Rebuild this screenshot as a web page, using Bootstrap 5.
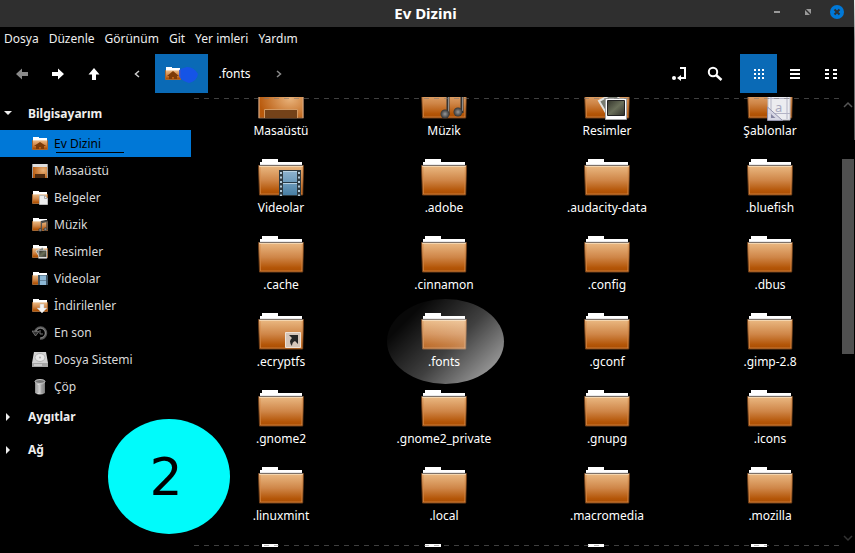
<!DOCTYPE html>
<html lang="tr" data-bs-theme="dark">
<head>
<meta charset="utf-8">
<meta name="viewport" content="width=device-width, initial-scale=1">
<title>Ev Dizini</title>
<link href="https://cdn.jsdelivr.net/npm/bootstrap@5.3.0/dist/css/bootstrap.min.css" rel="stylesheet">
<style>
  body { background: #000; color: #eee; font-family: "Noto Sans", "Open Sans", sans-serif; font-size: 12px; line-height: 18px; }
  a { color: inherit; text-decoration: none; }
  svg { display: block; }
  .fm-title { background: #2f2f2f; color: #d6d6d6; height: 27px; }
  .fm-title h1 { font-size: 15px; line-height: 22px; font-weight: 700; padding-top: 2px; }
  .fm-winbtns { right: 11px; top: 5px; gap: 15px; }
  .fm-plain { background: none; border: 0; padding: 0; color: inherit; font-size: 12px; line-height: 18px; display: flex; align-items: center; justify-content: center; }
  .fm-menu { gap: 10px; padding: 3px 4px; height: 27px; }
  .fm-tools { height: 43px; padding: 0 6px 4px 4px; }
  .fm-tools .fm-plain { width: 36px; height: 39px; color: #fff; }
  .fm-tools .fm-crumb { width: 53px; }
  .fm-tools .fm-wide { width: 37px; }
  .fm-tools .fm-dim { color: #8a8a8a; }
  .fm-tools .fm-on { background: #0a6ab6; }
  .fm-gap { margin-right: 7px; }
  .fm-side { width: 191px; margin-right: 3px; }
  .fm-head { height: 33px; padding: 0 4px; gap: 15px; font-weight: 700; width: 100%; justify-content: flex-start; color: #eee; }
  .fm-head svg { width: 9px; }
  .fm-place { height: 27px; padding-left: 32px; gap: 6px; color: #d9d9d9; }
  .fm-place.fm-on { background: #0078d7; color: #000; }
  .fm-mark { left: 56px; width: 68px; height: 1px; background: #000; bottom: 4px; }
  .fm-pane::before, .fm-pane::after { content: ""; position: absolute; left: 0; right: 1px; height: 1px; z-index: 2;
    background: repeating-linear-gradient(90deg, #77777788 0 5px, transparent 5px 10px); }
  .fm-pane::before { top: 1px; }
  .fm-pane::after { bottom: 1px; }
  .fm-view { height: calc(100vh - 103px); overflow: hidden; }
  .fm-grid { display: grid; grid-template-columns: repeat(4, 1fr); column-gap: 31px; row-gap: 17px; padding: 0 5px 0 21px; margin-top: -17px; }
  .fm-item { display: flex; flex-direction: column; align-items: center; gap: 2px; color: #fff; }
  .fm-item svg { width: 48px; height: 40px; overflow: visible; }
  .fm-glow { left: 50%; top: -12px; width: 117px; height: 85px; margin-left: -57px; border-radius: 50%;
    background: linear-gradient(135deg, #ffffff08 20%, #ffffff40 55%, #ffffff90 85%); }
  .fm-scroll { width: 14px; padding: 4px 1px 3px; }
  .fm-thumb { background: #505050; height: 195px; margin-top: 51px; }
  .fm-edge { top: 0; right: 0; width: 1px; height: 140px; background: linear-gradient(#eee, #888 40px, #555); }
  .fm-step { left: 108px; top: 419px; width: 122px; height: 115px; border-radius: 50%; background: #00fbfb; color: #000;
    font: 52px "DejaVu Sans", sans-serif; padding-right: 6px; }
</style>
<script src="https://cdn.jsdelivr.net/npm/bootstrap@5.3.0/dist/js/bootstrap.bundle.min.js"></script>
</head>
<body class="vh-100 overflow-hidden d-flex flex-column position-relative">
<svg width="0" height="0" class="position-absolute" aria-hidden="true">
  <defs>
    <linearGradient id="gBody" x1="0" y1="0" x2="0" y2="1"><stop offset="0" stop-color="#ebba84"/><stop offset=".5" stop-color="#cf8648"/><stop offset=".85" stop-color="#b45608"/><stop offset="1" stop-color="#a84c02"/></linearGradient>
    <radialGradient id="gDesk" cx=".7" cy=".45" r=".7"><stop offset="0" stop-color="#e8b27a"/><stop offset="1" stop-color="#b8590c"/></radialGradient>
    <linearGradient id="gFilm" x1="0" y1="0" x2="0" y2="1"><stop offset="0" stop-color="#8fb4d0"/><stop offset="1" stop-color="#487fa4"/></linearGradient>
    <radialGradient id="gNote"><stop offset="0" stop-color="#999"/><stop offset="1" stop-color="#333"/></radialGradient>
    <linearGradient id="gCan"><stop offset="0" stop-color="#888"/><stop offset=".35" stop-color="#ddd"/><stop offset="1" stop-color="#777"/></linearGradient>
    <linearGradient id="gShot" x1="0" y1="0" x2="1" y2="1"><stop offset="0" stop-color="#34352c"/><stop offset=".5" stop-color="#6a6f5a"/><stop offset="1" stop-color="#30312a"/></linearGradient>
    <symbol id="folder" viewBox="0 0 48 40" overflow="visible">
      <path d="M5 2h16v3h24v4H3V5h2z" fill="#fff"/><path d="M3 7h42v2H3z" fill="#e9e9ea"/>
      <path d="M1.500 8.500h45l-.8 29.500H2.500z" fill="url(#gBody)" stroke="#71401a" stroke-width="1"/>
      <path d="M2 8.500h44" stroke="#7c7067"/><path d="M2.500 9.500h43" stroke="#f4d5ae"/>
      <path d="M3.300 37h42M3 10l.5 27M45.300 10l-.5 27" stroke="#d58a48" stroke-opacity=".7" fill="none"/>
    </symbol>
    <symbol id="sfolder" viewBox="0 0 16 16" overflow="visible">
      <path d="M1 1h6v1h8v3H1z" fill="#fff"/><path d="M.5 4.500h15v9H.5z" fill="url(#gBody)" stroke="#a26632"/><path d="M1 4.500h14" stroke="#f0d4b5"/>
    </symbol>
    <symbol id="film" viewBox="0 0 22 26">
      <path d="M0 0h22v26H0z" fill="#2d3940"/><path d="M4 1h14v24H4z" fill="url(#gFilm)"/><path d="M4 12.500h14" stroke="#263a47"/><path d="M4 13.500h14M4 1.500h14" stroke="#b8d2e2"/>
      <path d="M2 2v24M20 2v24" stroke="#b5cbd9" stroke-width="2" stroke-dasharray="2 2.500"/>
    </symbol>
    <symbol id="notes" viewBox="0 0 24 30">
      <path d="M8 26V4l14-3v23" fill="none" stroke="#343434" stroke-width="3"/><path d="M8 6l14-3" stroke="#484848" stroke-width="4"/><path d="M8.500 24V4M22.500 22V4" stroke="#8a8a8a"/>
      <circle cx="5" cy="25" r="4.500" fill="url(#gNote)"/><circle cx="18" cy="23" r="4.500" fill="url(#gNote)"/>
    </symbol>
    <symbol id="photos" viewBox="0 0 30 30" overflow="visible">
      <path d="M1 10L18 1l8 18-15 8z" fill="#777b70" stroke="#e2e2df" stroke-width="2"/>
      <path d="M7.500 7.500h21v21h-21z" fill="#fff" stroke="#a5a5a5"/><path d="M9.500 9.500h17v15h-17z" fill="url(#gShot)" stroke="#222"/>
    </symbol>
  </defs>
</svg>

<header class="fm-title position-relative text-center flex-shrink-0">
  <h1 class="m-0 pe-1">Ev Dizini</h1>
  <div class="fm-winbtns position-absolute d-flex align-items-center">
    <button class="fm-plain" aria-label="Küçült"><svg width="16" height="14"><path d="M4 6h6v2H4z" fill="#999"/></svg></button>
    <button class="fm-plain" aria-label="Büyüt"><svg width="14" height="14"><path d="M5 4h5v5zM4 5v5h5z" fill="#999"/></svg></button>
    <button class="fm-plain" aria-label="Kapat"><svg width="14" height="14" overflow="visible"><circle cx="7" cy="7" r="7" fill="#0078d7"/><path d="M4.500 4.500l5 5m0-5l-5 5" stroke="#2f2f2f" stroke-width="2"/></svg></button>
  </div>
</header>

<nav class="fm-menu d-flex flex-shrink-0" aria-label="Menü">
  <a href="#">Dosya</a><a href="#">Düzenle</a><a href="#">Görünüm</a><a href="#">Git</a><a href="#">Yer imleri</a><a href="#">Yardım</a>
</nav>

<div class="fm-tools d-flex flex-shrink-0" role="toolbar" aria-label="Gezinti">
  <button class="fm-plain fm-dim" aria-label="Geri"><svg width="12" height="12"><path d="M0 6l6-5.500V4h6v4H6v3.500z" fill="currentColor"/></svg></button>
  <button class="fm-plain" aria-label="İleri"><svg width="12" height="12"><path d="M12 6L6 .5V4H0v4h6v3.500z" fill="currentColor"/></svg></button>
  <button class="fm-plain fm-gap" aria-label="Yukarı"><svg width="12" height="12"><path d="M6 0l5.500 6.500H8V12H4V6.500H.5z" fill="currentColor"/></svg></button>
  <button class="fm-plain" aria-label="Önceki"><svg width="6" height="8"><path d="M5 1L1.500 4 5 7" fill="none" stroke="#ccc" stroke-width="1.500"/></svg></button>
  <button class="fm-plain fm-crumb fm-on" aria-label="Ev Dizini"><svg width="36" height="20" viewBox="0 0 36 20"><use href="#sfolder" x="1" y="2" width="16" height="16"/><path d="M3 12l6-5 6 5h-2v3h-3v-2H8v2H5v-3z" fill="#7c3b08"/><path d="M15 6q4-2 8-3 7 0 11 7-1 7-9 9-9-3-10-7z" fill="#1750ef" opacity=".85"/></svg></button>
  <button class="fm-plain fm-crumb">.fonts</button>
  <button class="fm-plain fm-dim" aria-label="Sonraki"><svg width="6" height="8"><path d="M1 1l3.500 3L1 7" fill="none" stroke="currentColor" stroke-width="1.500"/></svg></button>
  <button class="fm-plain ms-auto" aria-label="Konum"><svg width="16" height="14"><circle cx="3" cy="11" r="2" fill="#fff"/><path d="M9 1h5v10H8" fill="none" stroke="#fff" stroke-width="2"/><path d="M6 11l4-3v6z" fill="#fff"/></svg></button>
  <button class="fm-plain fm-gap" aria-label="Ara"><svg width="16" height="16"><circle cx="6" cy="6" r="4.200" fill="none" stroke="#fff" stroke-width="2"/><path d="M9 9l5.500 5" stroke="#fff" stroke-width="2.500"/></svg></button>
  <button class="fm-plain fm-wide fm-on" aria-label="Simge görünümü"><svg width="10" height="10"><path d="M0 1h10M0 5h10M0 9h10" stroke="#fff" stroke-width="2" stroke-dasharray="2 2"/></svg></button>
  <button class="fm-plain" aria-label="Liste görünümü"><svg width="10" height="10"><path d="M0 1h10M0 5h10M0 9h10" stroke="#fff" stroke-width="2"/></svg></button>
  <button class="fm-plain" aria-label="Sıkışık görünüm"><svg width="12" height="10"><path d="M0 1h12M0 5h12M0 9h12" stroke="#fff" stroke-width="2" stroke-dasharray="4 4"/></svg></button>
</div>

<main class="d-flex flex-fill">
  <aside class="fm-side flex-shrink-0">
    <button class="fm-plain fm-head"><svg height="5"><path d="M0 0h8L4 4z" fill="#eee"/></svg>Bilgisayarım</button>
    <a href="#" class="fm-place fm-on d-flex align-items-center position-relative"><svg width="16" height="16"><use href="#sfolder"/><path d="M2 10l6-4 6 4h-2v3H9v-2H7v2H4v-3z" fill="#7c3b08"/></svg>Ev Dizini<span class="fm-mark position-absolute"></span></a>
    <a href="#" class="fm-place d-flex align-items-center"><svg width="16" height="16"><path d="M0 1h16v14H0z" fill="url(#gDesk)"/><path d="M0 1h16v3H0z" fill="#ddd"/><path d="M.5 1v14M15.500 1v14" stroke="#999"/><path d="M3 11h10v4H3z" fill="#4c2a10"/></svg>Masaüstü</a>
    <a href="#" class="fm-place d-flex align-items-center"><svg width="16" height="16"><use href="#sfolder"/><path d="M7.500 5.500h5l3 3v6h-8z" fill="#eee" stroke="#bbb"/><path d="M12.500 5.500v3h3" fill="none" stroke="#aaa"/></svg>Belgeler</a>
    <a href="#" class="fm-place d-flex align-items-center"><svg width="16" height="16"><use href="#sfolder"/><use href="#notes" x="6" y="3" width="10" height="12"/></svg>Müzik</a>
    <a href="#" class="fm-place d-flex align-items-center"><svg width="16" height="16"><use href="#sfolder"/><use href="#photos" x="3" y="3" width="13" height="12"/></svg>Resimler</a>
    <a href="#" class="fm-place d-flex align-items-center"><svg width="16" height="16"><use href="#sfolder"/><path d="M6 4h10v10H6z" fill="#405565"/><path d="M8 4.500h6V9H8zM8 9.500h6V14H8z" fill="#8db8d5"/></svg>Videolar</a>
    <a href="#" class="fm-place d-flex align-items-center"><svg width="16" height="16"><use href="#sfolder"/><path d="M8 6h4v4h3l-5 5-5-5h3z" fill="#f4f4f4" stroke="#bbb" stroke-width=".5"/></svg>İndirilenler</a>
    <a href="#" class="fm-place d-flex align-items-center"><svg width="16" height="16" fill="none"><path d="M3 8a5.500 5.500 0 1 1 5 5.500" stroke="#555" stroke-width="2.500"/><path d="M3.500 8a5 5 0 1 1 5 5" stroke="#999" stroke-width=".7"/><path d="M0 6l7 .5L3.500 11z" fill="#333" stroke="#888" stroke-width=".7"/><path d="M8 5v4h3" stroke="#777"/></svg>En son</a>
    <a href="#" class="fm-place d-flex align-items-center"><svg width="16" height="16"><path d="M2 0h12l2 11v4H0v-4z" fill="#d2d2d2"/><path d="M0 11h16v4H0z" fill="#a6a6a6"/><ellipse cx="8" cy="5.500" rx="5" ry="4" fill="#e8e8e8" stroke="#b5b5b5"/><circle cx="8" cy="5.500" r="1" fill="#aaa"/><path d="M2 13h8" stroke="#eee"/></svg>Dosya Sistemi</a>
    <a href="#" class="fm-place d-flex align-items-center"><svg width="16" height="16"><path d="M3 2h10v12q-5 3-10 0z" fill="url(#gCan)"/><ellipse cx="8" cy="2.500" rx="5" ry="2" fill="#777" stroke="#c5c5c5"/><path d="M6 6v8M10 6v8" stroke="#888" opacity=".6"/></svg>Çöp</a>
    <button class="fm-plain fm-head"><svg height="8"><path d="M2 0l4 4-4 4z" fill="#eee"/></svg>Aygıtlar</button>
    <button class="fm-plain fm-head"><svg height="8"><path d="M2 0l4 4-4 4z" fill="#eee"/></svg>Ağ</button>
  </aside>

  <section class="fm-pane flex-fill position-relative align-self-start" aria-label="Dosyalar">
    <div class="fm-view">
      <div class="fm-grid">
        <a href="#" class="fm-item"><svg><path d="M1.500 3.500h45v34.500h-45z" fill="url(#gDesk)" stroke="#8d6a50"/><path d="M1 3h46v6H1z" fill="#ddd"/><path d="M2.500 10v28M45.500 10v28" stroke="#d8a87c" opacity=".6"/><path d="M7.500 38v-8.500h33V38" fill="#744219" stroke="#d39a63"/></svg><span>Masaüstü</span></a>
        <a href="#" class="fm-item"><svg><use href="#folder"/><use href="#notes" x="20" y="9" width="24" height="30"/></svg><span>Müzik</span></a>
        <a href="#" class="fm-item"><svg><use href="#folder"/><use href="#photos" x="15" y="11" width="30" height="30"/></svg><span>Resimler</span></a>
        <a href="#" class="fm-item"><svg><use href="#folder"/><path d="M22 14h22v26H22z" fill="#ececf0" stroke="#c2c2cc"/><path d="M25 14v25M41 14v25M22 33.500h22M22 18.500h22" stroke="#b4b4c6"/><text x="29" y="32" font-size="13" fill="#a9a9c0">a</text><path d="M21.500 27v13.500h15z" fill="#d5d5e4" fill-opacity=".8" stroke="#9393ad"/><path d="M25 34v4h4.500z" fill="#8686a2"/></svg><span>Şablonlar</span></a>

        <a href="#" class="fm-item"><svg><use href="#folder"/><use href="#film" x="22" y="13" width="22" height="26"/></svg><span>Videolar</span></a>
        <a href="#" class="fm-item"><svg><use href="#folder"/></svg><span>.adobe</span></a>
        <a href="#" class="fm-item"><svg><use href="#folder"/></svg><span>.audacity-data</span></a>
        <a href="#" class="fm-item"><svg><use href="#folder"/></svg><span>.bluefish</span></a>

        <a href="#" class="fm-item"><svg><use href="#folder"/></svg><span>.cache</span></a>
        <a href="#" class="fm-item"><svg><use href="#folder"/></svg><span>.cinnamon</span></a>
        <a href="#" class="fm-item"><svg><use href="#folder"/></svg><span>.config</span></a>
        <a href="#" class="fm-item"><svg><use href="#folder"/></svg><span>.dbus</span></a>

        <a href="#" class="fm-item"><svg><use href="#folder"/><path d="M28.500 21.500h15v15h-15z" fill="#d4c5b9" stroke="#efe2d6"/><path d="M32 24h9v9l-3-3q-3 1-3 5-4-5 0-8z" fill="#262626"/></svg><span>.ecryptfs</span></a>
        <a href="#" class="fm-item position-relative"><svg><use href="#folder"/></svg><span class="fm-glow position-absolute"></span><span class="position-relative">.fonts</span></a>
        <a href="#" class="fm-item"><svg><use href="#folder"/></svg><span>.gconf</span></a>
        <a href="#" class="fm-item"><svg><use href="#folder"/></svg><span>.gimp-2.8</span></a>

        <a href="#" class="fm-item"><svg><use href="#folder"/></svg><span>.gnome2</span></a>
        <a href="#" class="fm-item"><svg><use href="#folder"/></svg><span>.gnome2_private</span></a>
        <a href="#" class="fm-item"><svg><use href="#folder"/></svg><span>.gnupg</span></a>
        <a href="#" class="fm-item"><svg><use href="#folder"/></svg><span>.icons</span></a>

        <a href="#" class="fm-item"><svg><use href="#folder"/></svg><span>.linuxmint</span></a>
        <a href="#" class="fm-item"><svg><use href="#folder"/></svg><span>.local</span></a>
        <a href="#" class="fm-item"><svg><use href="#folder"/></svg><span>.macromedia</span></a>
        <a href="#" class="fm-item"><svg><use href="#folder"/></svg><span>.mozilla</span></a>

        <div class="fm-item"><svg><use href="#folder"/></svg></div>
        <div class="fm-item"><svg><use href="#folder"/></svg></div>
        <div class="fm-item"><svg><use href="#folder"/></svg></div>
        <div class="fm-item"><svg><use href="#folder"/></svg></div>
      </div>
    </div>
  </section>

  <div class="fm-scroll d-flex flex-column flex-shrink-0" aria-hidden="true">
    <svg class="mx-auto" width="10" height="7"><path d="M1 6l4-4 4 4" fill="none" stroke="#555" stroke-width="1.500"/></svg>
    <div class="fm-thumb"></div>
    <svg class="mx-auto mt-auto mb-2" width="10" height="7"><path d="M1 1l4 4 4-4" fill="none" stroke="#333" stroke-width="1.500"/></svg>
  </div>
</main>

<div class="fm-edge position-absolute"></div>
<div class="fm-step position-absolute d-flex align-items-center justify-content-center">2</div>
</body>
</html>
